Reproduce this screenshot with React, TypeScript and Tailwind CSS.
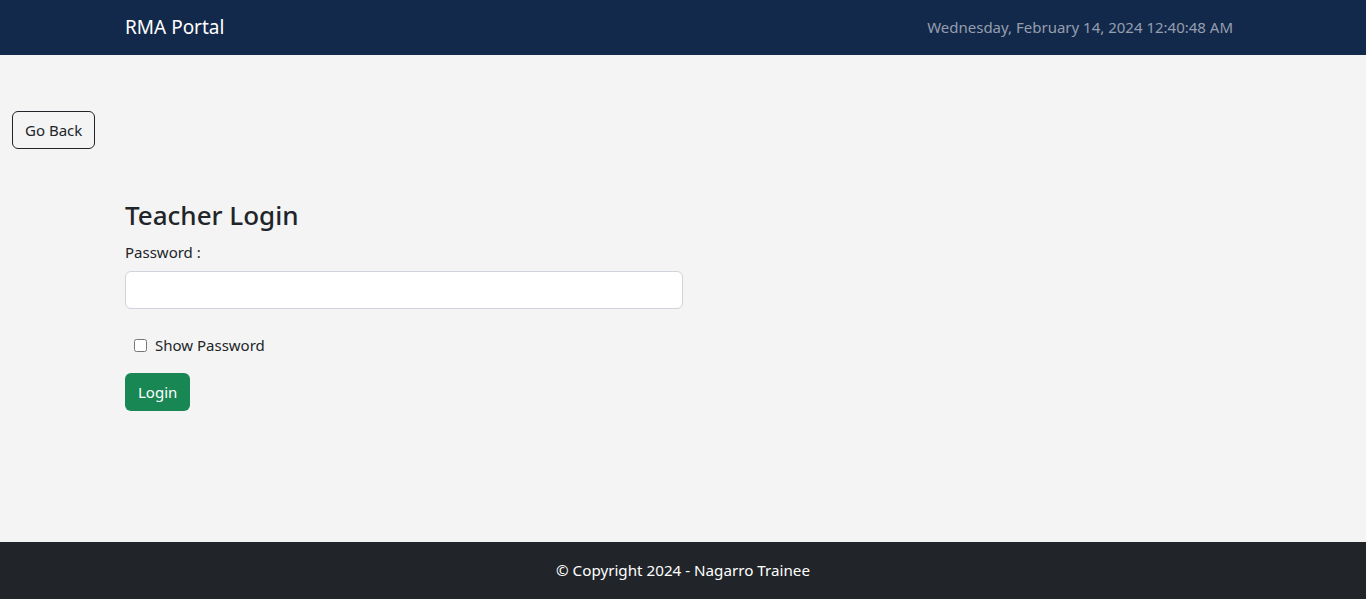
import { useState } from 'react';

export default function App() {
  const [show, setShow] = useState(false);
  const [password, setPassword] = useState('');

  return (
    <div
      className="min-h-screen flex flex-col bg-[#f4f4f4] text-[#212529]"
      style={{ fontFamily: '"Noto Sans", "Open Sans", sans-serif' }}
    >
      <nav className="h-[55px] bg-[#13294b] shrink-0">
        <div className="max-w-[1116px] mx-auto h-full flex items-center justify-between">
          <span className="text-white text-[19px]">RMA Portal</span>
          <span className="text-[#959eae] text-[15px] mr-2">
            Wednesday, February 14, 2024 12:40:48 AM
          </span>
        </div>
      </nav>

      <main className="flex-1">
        <button className="mt-14 ml-3 h-[38px] px-3 border border-[#212529] rounded-md text-[15px] text-[#212529]">
          Go Back
        </button>

        <div className="max-w-[1116px] mx-auto mt-[49px]">
          <h3 className="text-[26px] font-medium leading-[34px] mb-2">Teacher Login</h3>
          <label className="block text-[15px] leading-6 mb-[7px]">Password :</label>
          <input
            type={show ? 'text' : 'password'}
            value={password}
            onChange={(e) => setPassword(e.target.value)}
            className="block w-[558px] h-[38px] bg-white border border-[#ced4da] rounded-md px-3 outline-none"
          />
          <div className="flex items-center mt-6 ml-[9px] h-6">
            <input
              type="checkbox"
              checked={show}
              onChange={() => setShow(!show)}
              className="w-[13px] h-[13px] m-0"
            />
            <span className="ml-2 text-[15px]">Show Password</span>
          </div>
          <button className="mt-4 h-[38px] px-[13px] bg-[#198754] text-white rounded-md text-[15px]">
            Login
          </button>
        </div>
      </main>

      <footer className="h-[57px] bg-[#212529] shrink-0 flex items-center justify-center">
        <span className="text-white text-[15.2px]">© Copyright 2024 - Nagarro Trainee</span>
      </footer>
    </div>
  );
}
